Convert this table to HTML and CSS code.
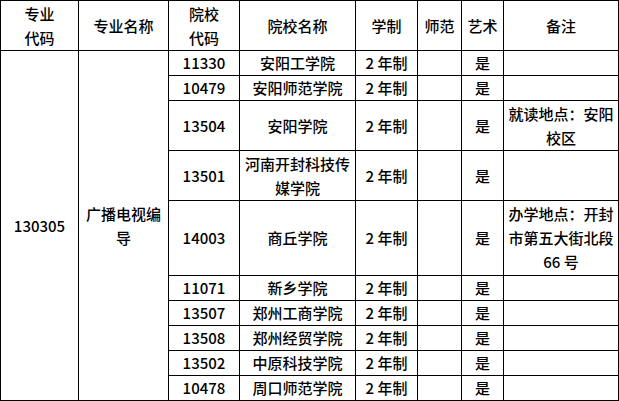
FILE: index.html
```html
<!DOCTYPE html>
<html lang="zh-CN">
<head>
<meta charset="utf-8">
<title>专业表</title>
<link rel="stylesheet" href="styles.css">
</head>
<body>
<table class="grid">
  <colgroup>
    <col class="c1"><col class="c2"><col class="c3"><col class="c4"><col class="c5"><col class="c6"><col class="c7"><col class="c8">
  </colgroup>
  <tr class="h2">
    <td>专业<br>代码</td>
    <td>专业名称</td>
    <td>院校<br>代码</td>
    <td>院校名称</td>
    <td>学制</td>
    <td>师范</td>
    <td>艺术</td>
    <td>备注</td>
  </tr>
  <tr class="h1">
    <td rowspan="10">130305</td>
    <td rowspan="10">广播电视编导</td>
    <td>11330</td><td>安阳工学院</td><td>2 年制</td><td></td><td>是</td><td></td>
  </tr>
  <tr class="h1"><td>10479</td><td>安阳师范学院</td><td>2 年制</td><td></td><td>是</td><td></td></tr>
  <tr class="h2"><td>13504</td><td>安阳学院</td><td>2 年制</td><td></td><td>是</td><td>就读地点：安阳校区</td></tr>
  <tr class="h2"><td>13501</td><td>河南开封科技传媒学院</td><td>2 年制</td><td></td><td>是</td><td></td></tr>
  <tr class="h3"><td>14003</td><td>商丘学院</td><td>2 年制</td><td></td><td>是</td><td>办学地点：开封市第五大街北段 66 号</td></tr>
  <tr class="h1"><td>11071</td><td>新乡学院</td><td>2 年制</td><td></td><td>是</td><td></td></tr>
  <tr class="h1"><td>13507</td><td>郑州工商学院</td><td>2 年制</td><td></td><td>是</td><td></td></tr>
  <tr class="h1"><td>13508</td><td>郑州经贸学院</td><td>2 年制</td><td></td><td>是</td><td></td></tr>
  <tr class="h1"><td>13502</td><td>中原科技学院</td><td>2 年制</td><td></td><td>是</td><td></td></tr>
  <tr class="h1"><td>10478</td><td>周口师范学院</td><td>2 年制</td><td></td><td>是</td><td></td></tr>
</table>
</body>
</html>
```

FILE: styles.css
```css
html, body {
  margin: 0;
  padding: 0;
  background: #ffffff;
}
.grid {
  border-collapse: collapse;
  table-layout: fixed;
  width: 618px;
  font-family: "Noto Sans CJK SC", "Noto Sans", sans-serif;
  font-size: 15px;
  font-weight: 500;
  color: #000000;
}
.c1 { width: 78px; }
.c2 { width: 90px; }
.c3 { width: 71px; }
.c4 { width: 116px; }
.c5 { width: 62px; }
.c6 { width: 44px; }
.c7 { width: 42px; }
.c8 { width: 115px; }
.grid td {
  border: 1px solid #000000;
  padding: 0 4px;
  text-align: center;
  vertical-align: middle;
  line-height: 24px;
  overflow: hidden;
}
.h1 { height: 25px; }
.h2 { height: 50px; }
.h3 { height: 75px; }
```
